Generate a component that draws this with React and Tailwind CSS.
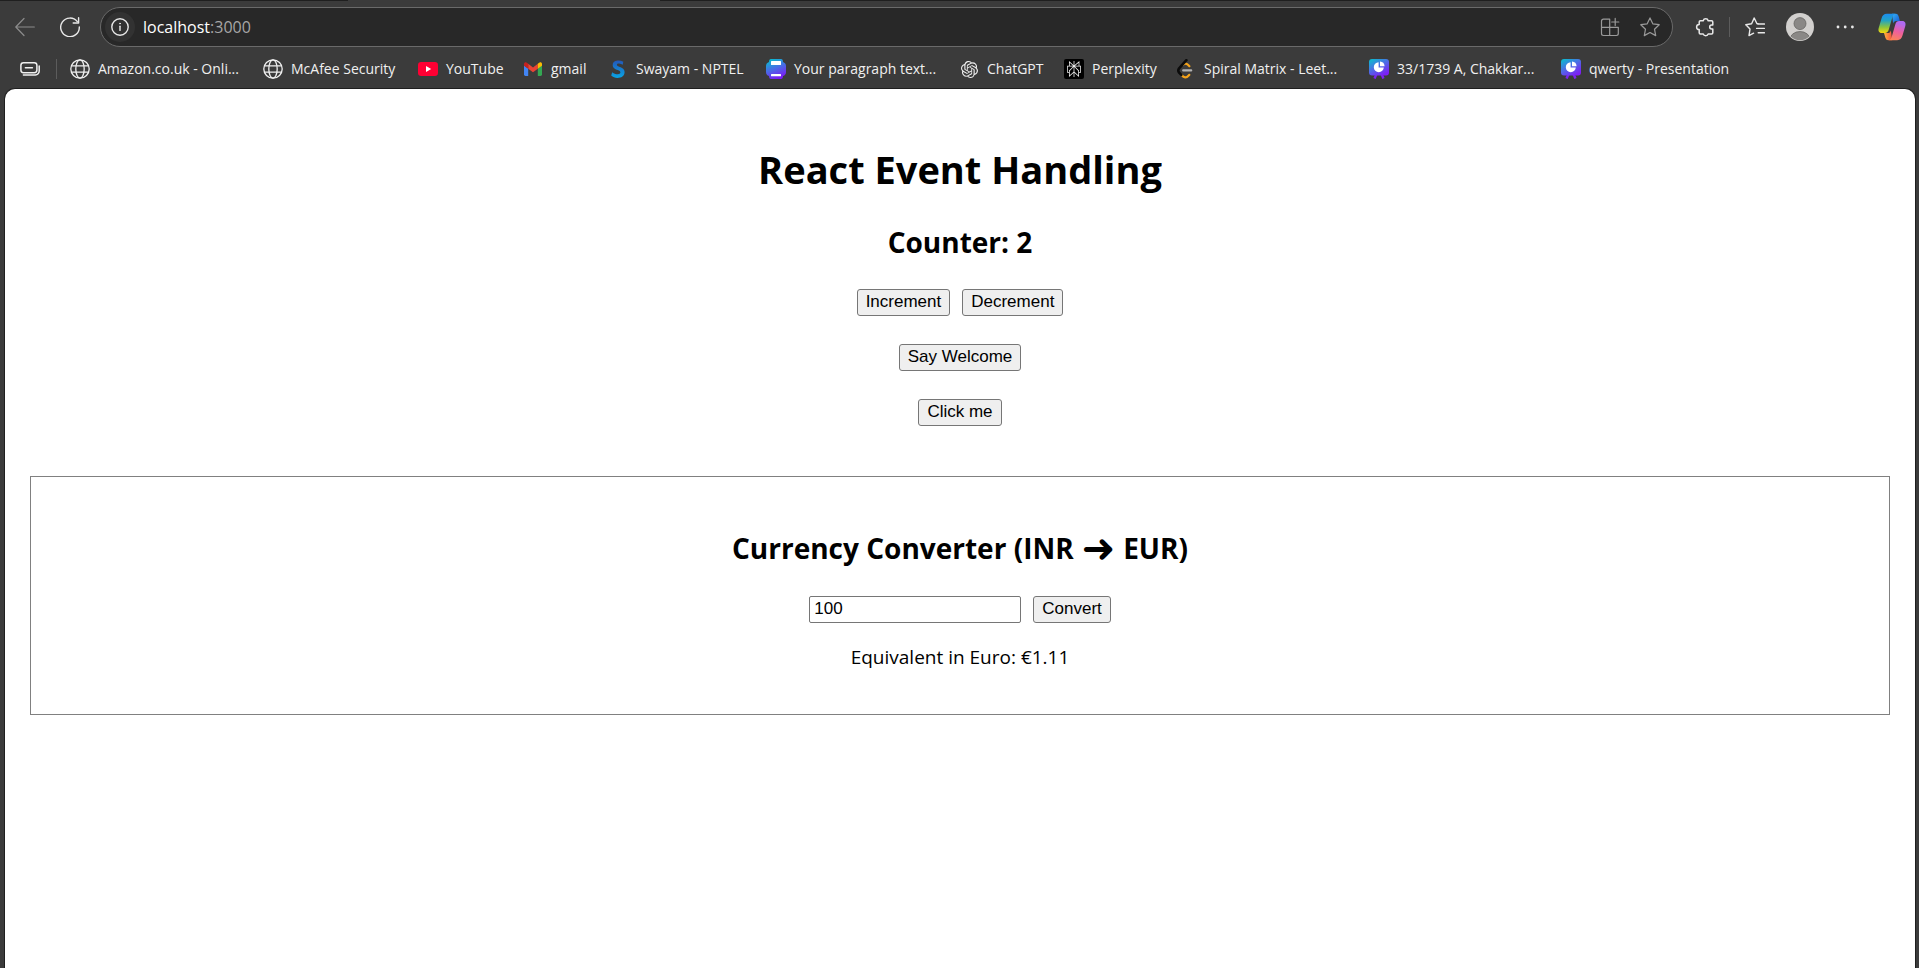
import { useState } from "react";
import { SiOpenai, SiPerplexity } from "react-icons/si";

const stroke = {
  fill: "none",
  stroke: "currentColor",
  strokeLinecap: "round",
  strokeLinejoin: "round",
};

function BackIcon() {
  return (
    <svg viewBox="0 0 20 20" className="size-5" {...stroke} strokeWidth="1.2" aria-hidden="true">
      <path d="M19.3 10H.8M9 1.5.8 10 9 18.5" />
    </svg>
  );
}

function ReloadIcon() {
  return (
    <svg viewBox="0 0 20 20" className="size-5" {...stroke} strokeWidth="1.4" aria-hidden="true">
      <path d="M17.3 4.6A9.3 9.3 0 1 0 19.3 10" />
      <path d="M18.6.8V6H13.2" />
    </svg>
  );
}

function InfoIcon() {
  return (
    <svg viewBox="0 0 18 18" className="size-[18px]" {...stroke} strokeWidth="1.4" aria-hidden="true">
      <circle cx="9" cy="9" r="8.2" />
      <path d="M9 8.2V12.4" />
      <circle cx="9" cy="5.6" r=".5" fill="currentColor" strokeWidth=".8" />
    </svg>
  );
}

function AppsIcon() {
  return (
    <svg viewBox="0 0 20 20" className="size-5" {...stroke} strokeWidth="1.2" aria-hidden="true">
      <path d="M9.7 2.2H3.4A1.9 1.9 0 0 0 1.5 4.1V16.6A1.9 1.9 0 0 0 3.4 18.5H16.4A1.9 1.9 0 0 0 18.3 16.6V10.3H1.5M9.7 2.2V18.5M15.2 1.4V8.6M11.7 5H18.8" />
    </svg>
  );
}

function StarIcon() {
  return (
    <svg viewBox="0 0 20 20" className="size-5" {...stroke} strokeWidth="1.2" aria-hidden="true">
      <path d="m10 .9 2.8 5.9 6.4.9-4.7 4.5 1.2 6.4L10 15.5l-5.7 3.1 1.2-6.4L.8 7.7l6.4-.9z" />
    </svg>
  );
}

function PuzzleIcon() {
  return (
    <svg viewBox="0 0 20 20" className="size-5" {...stroke} strokeWidth="1.5" aria-hidden="true">
      <path d="M4.2 4.9A1.2 1.2 0 0 1 5.4 3.7H8.2A2.6 2.6 0 0 1 13.2 3.7H16.6A1.2 1.2 0 0 1 17.8 4.9V8.1H16.6A1.9 1.9 0 0 0 16.6 11.9H17.8V15.7A1.2 1.2 0 0 1 16.6 16.9H13.2A2.6 2.6 0 0 1 8.2 16.9H5.4A1.2 1.2 0 0 1 4.2 15.7V12.6A2.6 2.6 0 0 1 4.2 7.4Z" />
    </svg>
  );
}

function FavoritesIcon() {
  return (
    <svg viewBox="0 0 20 20" className="size-5" {...stroke} strokeWidth="1.4" aria-hidden="true">
      <path d="M13 6.8H12L9.2 1 6.6 6.8.8 7.7 5 12.1 4 18.6 8.6 16.2" />
      <path d="M13.2 7H19.4M11.6 11.4H19.4M13.2 15.8H19.4" />
    </svg>
  );
}

function AvatarIcon() {
  return (
    <svg viewBox="0 0 28 28" className="size-7" aria-hidden="true">
      <defs>
        <clipPath id="avatar-clip">
          <circle cx="14" cy="14" r="13.2" />
        </clipPath>
      </defs>
      <circle cx="14" cy="14" r="14" fill="#d2d0ce" />
      <g clipPath="url(#avatar-clip)" fill="#8a8886" stroke="#605e5c" strokeWidth=".7">
        <circle cx="14" cy="10.6" r="6" />
        <ellipse cx="14" cy="26.5" rx="10" ry="8" />
      </g>
    </svg>
  );
}

function DotsIcon() {
  return (
    <svg viewBox="0 0 18 18" className="size-[18px]" fill="currentColor" aria-hidden="true">
      <circle cx="2" cy="9" r="1.4" />
      <circle cx="9.2" cy="9" r="1.4" />
      <circle cx="16.4" cy="9" r="1.4" />
    </svg>
  );
}

function CopilotIcon() {
  return (
    <svg viewBox="0 0 28 28" className="size-7" aria-hidden="true">
      <defs>
        <linearGradient id="cp-a" x1="0" y1="0" x2="0" y2="1">
          <stop offset="0" stopColor="#1c8df0" />
          <stop offset=".35" stopColor="#22a3c4" />
          <stop offset=".7" stopColor="#8cc43c" />
          <stop offset="1" stopColor="#f7d80e" />
        </linearGradient>
        <linearGradient id="cp-b" x1=".3" y1="0" x2="0" y2="1">
          <stop offset="0" stopColor="#b06af0" />
          <stop offset=".45" stopColor="#ee5f9e" />
          <stop offset="1" stopColor="#ff8a4a" />
        </linearGradient>
        <linearGradient id="cp-c" x1="0" y1="0" x2="1" y2="1">
          <stop offset="0" stopColor="#35b3f5" />
          <stop offset="1" stopColor="#1550d0" />
        </linearGradient>
        <linearGradient id="cp-d" x1="0" y1="0" x2="1" y2="0">
          <stop offset="0" stopColor="#ffb23e" />
          <stop offset="1" stopColor="#f2503f" />
        </linearGradient>
      </defs>
      <path d="M14 .8H17.8C19.5.8 20.2 2 20.7 3.6L21.9 8H18.2C16.6 8 15.6 9 15.1 10.6Z" fill="url(#cp-c)" />
      <path d="M14.2 27.2H10.3C8.6 27.2 7.8 26 7.3 24.4L6 20H9.8C11.4 20 12.4 19 12.9 17.4Z" fill="url(#cp-d)" />
      <path d="M8.8.8H17.3C15.5 1 14.8 2.6 14.2 4.8L10.8 16.6C10.2 18.8 9 20 6.9 20H3.7C.8 20 0 17.6.7 15L3.5 5.4C4.4 2.4 6 .8 8.8.8Z" fill="url(#cp-a)" />
      <path d="M19.2 27.2H10.8C12.5 27 13.3 25.4 13.9 23.2L17.3 11.4C17.9 9.2 19.1 8 21.2 8H24.3C27.2 8 28 10.4 27.3 13L24.5 22.6C23.6 25.6 22 27.2 19.2 27.2Z" fill="url(#cp-b)" />
    </svg>
  );
}

function CollectionsIcon() {
  return (
    <svg viewBox="0 0 20 20" className="size-5 shrink-0" {...stroke} strokeWidth="1.5" aria-hidden="true">
      <rect x=".9" y="3.7" width="16" height="10" rx="2.6" />
      <path d="M5.4 8.7H12.4M3.4 15.9H15.4A3.8 3.8 0 0 0 19.2 12.1V7" />
    </svg>
  );
}

function GlobeIcon() {
  return (
    <svg viewBox="0 0 20 20" className="size-5 shrink-0" {...stroke} strokeWidth="1.3" aria-hidden="true">
      <circle cx="10" cy="10" r="9.2" />
      <ellipse cx="10" cy="10" rx="4.2" ry="9.2" />
      <path d="M1.6 6.8H18.4M1.6 13.2H18.4" />
    </svg>
  );
}

function YouTubeIcon() {
  return (
    <svg viewBox="0 0 20 20" className="size-5 shrink-0" aria-hidden="true">
      <rect x="0" y="3" width="20" height="14" rx="3.2" fill="#ff0033" />
      <path d="M8 7V13L13.2 10Z" fill="#fff" />
    </svg>
  );
}

function GmailIcon() {
  return (
    <svg viewBox="0 0 20 20" className="size-5 shrink-0" aria-hidden="true">
      <path d="M1 6.5 5.2 9.6V17H2.4A1.4 1.4 0 0 1 1 15.6Z" fill="#4285f4" />
      <path d="M19 6.5 14.8 9.6V17H17.6A1.4 1.4 0 0 0 19 15.6Z" fill="#34a853" />
      <path d="M5.2 4.8 10 8.4 14.8 4.8V9.7L10 13.3 5.2 9.7Z" fill="#ea4335" />
      <path d="M1 6.7V5C1 3.2 3 2.7 4.2 3.9L5.2 4.8V9.7L1 6.7Z" fill="#c5221f" />
      <path d="M19 6.7V5C19 3.2 17 2.7 15.8 3.9L14.8 4.8V9.7L19 6.7Z" fill="#fbbc04" />
    </svg>
  );
}

function SwayamIcon() {
  return (
    <svg viewBox="0 0 20 20" className="size-5 shrink-0" aria-hidden="true">
      <defs>
        <linearGradient id="swayam" x1="0" y1="0" x2="0" y2="1">
          <stop offset="0" stopColor="#2457b8" />
          <stop offset="1" stopColor="#08a4e4" />
        </linearGradient>
      </defs>
      <path
        d="M15.3 2.7C13.5 1.7 11.5 1.3 9.5 1.5 6.1 1.8 4.5 3.9 4.7 6.4 5 9.3 7.6 10.2 9.7 11 11.5 11.7 12.5 12.3 12.4 13.6 12.3 15 10.5 15.6 8.6 15.2 7 14.9 5.4 14.2 4.2 13.2L3.2 16.6C4.9 18 7 18.9 9.4 18.9 13.3 18.9 16.5 17 16.6 13.2 16.7 10 14.2 8.8 11.9 7.9 10.1 7.2 8.9 6.8 8.9 5.7 8.9 4.7 10 4.3 11.4 4.5 12.7 4.7 13.7 5.1 14.7 5.7Z"
        fill="url(#swayam)"
      />
    </svg>
  );
}

function DocIcon() {
  return (
    <svg viewBox="0 0 20 20" className="size-5 shrink-0" aria-hidden="true">
      <defs>
        <linearGradient id="doc" x1=".2" y1="0" x2=".6" y2="1">
          <stop offset="0" stopColor="#06bfd0" />
          <stop offset=".5" stopColor="#4a6ae6" />
          <stop offset="1" stopColor="#7d18f5" />
        </linearGradient>
      </defs>
      <path d="M5 0H15Q17 0 17 3 20 4 20 7V13Q20 16 17 17 17 20 15 20H5Q3 20 3 17 0 16 0 13V7Q0 4 3 3 3 0 5 0Z" fill="url(#doc)" />
      <rect x="5" y="2" width="10" height="4" rx=".5" fill="#fff" />
      <rect x="5" y="15" width="10" height="2.2" rx=".5" fill="#fff" />
    </svg>
  );
}

function ChatGptIcon() {
  return (
    <span className="flex size-5 shrink-0 items-center justify-center">
      <SiOpenai className="size-[17px]" aria-hidden="true" />
    </span>
  );
}

function PerplexityIcon() {
  return (
    <span className="flex size-5 shrink-0 items-center justify-center rounded-xs bg-black">
      <SiPerplexity className="size-4" aria-hidden="true" />
    </span>
  );
}

function LeetIcon() {
  return (
    <svg viewBox="0 0 20 20" className="size-5 shrink-0" {...stroke} strokeWidth="2.2" aria-hidden="true">
      <path d="M7 5.6Q9.8 3.6 12.2 6L13.4 7.2M5.6 16Q9.4 20.4 12.4 16.8L13.3 15.9" stroke="#f5a31a" />
      <path d="M10.4 1.2 3.1 9.3Q1.5 11.5 3.1 13.6L5.3 15.8" stroke="#0b0b0b" strokeWidth="2.6" />
      <path d="M7.2 11.4H15.2" stroke="#b3b3b3" />
    </svg>
  );
}

function SlidesIcon({ id }) {
  return (
    <svg viewBox="0 0 20 20" className="size-5 shrink-0" aria-hidden="true">
      <defs>
        <linearGradient id={id} x1="0" y1="0" x2=".7" y2="1">
          <stop offset="0" stopColor="#04c3cc" />
          <stop offset=".5" stopColor="#4b70e4" />
          <stop offset="1" stopColor="#7d1ff5" />
        </linearGradient>
      </defs>
      <path d="M7.5 15 5.5 19.6M12.5 15 14.5 19.6" stroke="#7d22f0" strokeWidth="2.4" />
      <rect x="0" y="0" width="20" height="16.4" rx="3" fill={`url(#${id})`} />
      <path d="M9.6 3.2A5 5 0 1 0 14.8 8.4H9.6Z" fill="#fff" />
      <path d="M11 2.6A5 5 0 0 1 15.6 7.2H11Z" fill="#fff" />
    </svg>
  );
}

const bookmarks = [
  { label: "Amazon.co.uk - Onli...", icon: <GlobeIcon />, width: "w-[193px]" },
  { label: "McAfee Security", icon: <GlobeIcon />, width: "w-[155px]" },
  { label: "YouTube", icon: <YouTubeIcon />, width: "w-[105px]" },
  { label: "gmail", icon: <GmailIcon />, width: "w-[85px]" },
  { label: "Swayam - NPTEL", icon: <SwayamIcon />, width: "w-[158px]" },
  { label: "Your paragraph text...", icon: <DocIcon />, width: "w-[193px]" },
  { label: "ChatGPT", icon: <ChatGptIcon />, width: "w-[105px]" },
  { label: "Perplexity", icon: <PerplexityIcon />, width: "w-[112px]" },
  { label: "Spiral Matrix - Leet...", icon: <LeetIcon />, width: "w-[193px]" },
  { label: "33/1739 A, Chakkar...", icon: <SlidesIcon id="slides-a" />, width: "w-[192px]" },
  { label: "qwerty - Presentation", icon: <SlidesIcon id="slides-b" />, width: "w-[193px]" },
];

function TabStripEdge() {
  return (
    <div className="flex h-px bg-[#3b3b3b]">
      <span className="w-[348px] bg-[#1f1f1f]" />
      <span className="ml-[312px] flex-1 bg-[#1f1f1f]" />
    </div>
  );
}

function Toolbar() {
  return (
    <div className="flex h-[51px] items-center pr-[13px] pl-[15px] text-[#e8e8e8]">
      <button type="button" aria-label="Back" className="text-[#8c8c8c]">
        <BackIcon />
      </button>
      <button type="button" aria-label="Reload" className="ml-[25px]">
        <ReloadIcon />
      </button>
      <div className="ml-5 flex h-10 flex-1 items-center rounded-full border border-[#6a6a6a] bg-[#282828] pr-3 pl-1">
        <button
          type="button"
          aria-label="Site information"
          className="flex size-[30px] items-center justify-center rounded-full bg-[#323232]"
        >
          <InfoIcon />
        </button>
        <div className="ml-2 flex-1 text-base">
          <span className="text-white">localhost</span>
          <span className="text-[#a6a6a6]">:3000</span>
        </div>
        <div className="flex items-center gap-5 text-[#9a9a9a]">
          <button type="button" aria-label="Apps">
            <AppsIcon />
          </button>
          <button type="button" aria-label="Add to favourites">
            <StarIcon />
          </button>
        </div>
      </div>
      <button type="button" aria-label="Extensions" className="ml-[22px]">
        <PuzzleIcon />
      </button>
      <span className="ml-[14px] h-5 w-px bg-[#5c5c5c]" />
      <button type="button" aria-label="Favourites" className="ml-[15px]">
        <FavoritesIcon />
      </button>
      <button type="button" aria-label="Profile" className="ml-[21px]">
        <AvatarIcon />
      </button>
      <button type="button" aria-label="Settings and more" className="ml-[22px]">
        <DotsIcon />
      </button>
      <button type="button" aria-label="Copilot" className="ml-6">
        <CopilotIcon />
      </button>
    </div>
  );
}

function BookmarksBar() {
  return (
    <nav aria-label="Favourites bar" className="flex h-[34px] items-center pl-5 text-sm text-[#f0f0f0]">
      <button type="button" aria-label="Workspaces">
        <CollectionsIcon />
      </button>
      <span className="mr-[13px] ml-4 h-5 w-px bg-[#5c5c5c]" />
      {bookmarks.map(({ label, icon, width }) => (
        <a key={label} href="#" className={`flex shrink-0 items-center gap-2 whitespace-nowrap ${width}`}>
          {icon}
          {label}
        </a>
      ))}
    </nav>
  );
}

function ActionButton({ children, ...props }) {
  return (
    <button
      type="button"
      className="h-[27px] rounded-[3px] border border-[#767676] bg-[#efefef] px-2 pb-[2px] font-['Liberation_Sans',Arial,sans-serif] text-[17px] leading-none text-black"
      {...props}
    >
      {children}
    </button>
  );
}

function CurrencyConverter() {
  const [amount, setAmount] = useState("100");
  const [euro, setEuro] = useState("1.11");

  return (
    <section className="mx-[25px] mt-[50px] flex flex-col items-center border border-[#808080] pt-[49px] pb-[43px]">
      <h2 className="flex items-center gap-2 text-[28px] leading-[44px] font-bold">
        Currency Converter (INR
        <span className="font-['DejaVu_Sans',sans-serif] text-[40px]">➜</span>
        EUR)
      </h2>
      <form
        className="mt-[26px] flex items-center gap-3"
        onSubmit={(e) => {
          e.preventDefault();
          setEuro((Number(amount) / 90).toFixed(2));
        }}
      >
        <input
          aria-label="Amount in INR"
          value={amount}
          onChange={(e) => setAmount(e.target.value)}
          className="h-[27px] w-[212px] rounded-[2px] border border-[#767676] bg-white px-1 pb-[2px] font-['Liberation_Sans',Arial,sans-serif] text-[17px]"
        />
        <ActionButton type="submit">Convert</ActionButton>
      </form>
      <p className="mt-5 text-[19px] leading-7">Equivalent in Euro: €{euro}</p>
    </section>
  );
}

export default function App() {
  const [count, setCount] = useState(2);

  return (
    <div className="flex min-h-screen flex-col bg-[#3b3b3b] font-['Open_Sans','Noto_Sans',sans-serif]">
      <header>
        <TabStripEdge />
        <Toolbar />
        <BookmarksBar />
      </header>
      <main className="mt-[2px] mr-[3px] ml-1 flex flex-1 flex-col rounded-t-[11px] border border-b-0 border-[#1f1f1f] bg-white pt-[50px] text-black">
        <div className="flex flex-col items-center">
          <h1 className="text-[38px] leading-[60px] font-bold">React Event Handling</h1>
          <h2 className="mt-[21px] text-[28px] leading-[44px] font-bold">Counter: {count}</h2>
          <div className="mt-[25px] flex gap-3">
            <ActionButton onClick={() => setCount(count + 1)}>Increment</ActionButton>
            <ActionButton onClick={() => setCount(count - 1)}>Decrement</ActionButton>
          </div>
          <div className="mt-7 flex flex-col items-center gap-7">
            <ActionButton>Say Welcome</ActionButton>
            <ActionButton>Click me</ActionButton>
          </div>
        </div>
        <CurrencyConverter />
      </main>
    </div>
  );
}
